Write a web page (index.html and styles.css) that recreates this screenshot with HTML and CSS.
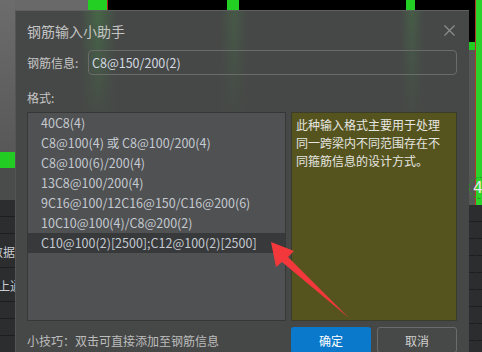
FILE: index.html
```html
<!DOCTYPE html>
<html lang="zh-CN">
<head>
    <meta charset="UTF-8">
    <title>钢筋输入小助手</title>
    <link rel="stylesheet" href="styles.css">
</head>
<body>

<div class="desk">
    <div class="edge-left">
        <div class="el-grey"></div>
        <div class="el-green"></div>
        <div class="el-mid"></div>
        <div class="el-rows">
            <span class="el-text t1">数据</span>
            <span class="el-text t2">上通</span>
        </div>
    </div>

    <div class="center">
        <div class="strip">
            <span class="seg seg-grey"></span>
            <span class="seg seg-green g1"></span>
            <span class="seg seg-black b1"></span>
            <span class="seg seg-green g2"></span>
            <span class="seg seg-black b2"></span>
            <span class="seg seg-green g3"></span>
            <span class="seg seg-black b3"></span>
        </div>
    </div>

    <div class="edge-right">
        <div class="er-a">
            <div class="er-black"></div>
            <div class="er-green-bit"></div>
            <div class="er-grey"></div>
            <div class="er-rows"></div>
        </div>
        <div class="er-line"></div>
        <div class="er-b">
            <div class="er-green"></div>
            <div class="er-rows"></div>
        </div>
        <span class="badge">4</span>
    </div>

    <!-- dialog window -->
    <div class="dialog">
        <div class="dlg-title">
            <span>钢筋输入小助手</span>
            <svg class="close" width="11" height="11" viewBox="0 0 11 11">
                <path d="M0.5 0.5 L10.5 10.5 M10.5 0.5 L0.5 10.5" stroke="#8c8d8c" stroke-width="1.2" fill="none"/>
            </svg>
        </div>
        <div class="field-row">
            <label class="field-label">钢筋信息:</label>
            <div class="input">C8@150/200(2)</div>
        </div>
        <div class="section-label">格式:</div>
        <div class="panes">
            <ul class="fmt-list">
                <li>40C8(4)</li>
                <li>C8@100(4) 或 C8@100/200(4)</li>
                <li>C8@100(6)/200(4)</li>
                <li>13C8@100/200(4)</li>
                <li>9C16@100/12C16@150/C16@200(6)</li>
                <li>10C10@100(4)/C8@200(2)</li>
                <li class="sel">C10@100(2)[2500];C12@100(2)[2500]</li>
            </ul>
            <div class="fmt-desc">此种输入格式主要用于处理同一跨梁内不同范围存在不同箍筋信息的设计方式。</div>
        </div>
        <div class="dlg-foot">
            <span class="tip">小技巧：双击可直接添加至钢筋信息</span>
            <div class="btns">
                <button class="btn btn-ok">确定</button>
                <button class="btn btn-cancel">取消</button>
            </div>
        </div>
    </div>

    <!-- red annotation arrow -->
    <svg class="arrow" width="482" height="352" viewBox="0 0 482 352">
        <polygon points="271,242 294,251 288,257 349,318 282,262 276,267" fill="#f2383a"/>
    </svg>
</div>

</body>
</html>
```

FILE: styles.css
```css
body {
    margin: 0;
    padding: 0;
    background: #2b2c2e;
    font-family: "Noto Sans CJK SC", "Noto Sans", sans-serif;
}
.desk {
    position: relative;
    display: flex;
    width: 482px;
    height: 352px;
    overflow: hidden;
}

/* background app, left side */
.edge-left {
    width: 15px;
    display: flex;
    flex-direction: column;
}
.el-grey {
    height: 152px;
    background: linear-gradient(#6c6c6c, #585858);
}
.el-green {
    height: 16px;
    background: #23cc23;
}
.el-mid {
    height: 32px;
    background: #4a4b4b;
}
.el-rows {
    flex: 1;
    position: relative;
    background: repeating-linear-gradient(#2c2d2f 0, #2c2d2f 16px, #1d1e1f 16px, #1d1e1f 17px);
    overflow: hidden;
}
.el-text {
    position: absolute;
    left: -9px;
    font-size: 12px;
    color: #c8ccd2;
    white-space: nowrap;
}
.t1 { top: 43px; }
.t2 { top: 77px; left: -2px; }

/* background app, top strip */
.center {
    width: 454px;
}
.strip {
    display: flex;
    height: 50px;
}
.seg { display: block; height: 100%; }
.seg-grey { width: 73px; background: #696969; }
.seg-green { background: #22cf22; }
.seg-black { background: #000; }
.g1 { width: 19px; border-right: 1px solid #b02020; }
.b1 { width: 119px; }
.g2 { width: 12px; }
.b2 { width: 167px; }
.g3 { width: 9px; }
.b3 { flex: 1; }

/* background app, right side */
.edge-right {
    position: relative;
    width: 13px;
    display: flex;
}
.er-a, .er-b {
    display: flex;
    flex-direction: column;
}
.er-a { width: 6px; }
.er-b { width: 6px; }
.er-black { height: 42px; background: #000; }
.er-green-bit { height: 8px; background: #22cc22; }
.er-grey { height: 155px; background: #555656; }
.er-line { width: 1px; height: 205px; background: #b8352a; }
.er-green { height: 205px; background: #2ad42a; }
.er-rows {
    flex: 1;
    background: repeating-linear-gradient(#2c2d2f 0, #2c2d2f 16px, #1d1e1f 16px, #1d1e1f 17px);
}
.badge {
    position: absolute;
    left: 0;
    top: 177px;
    width: 22px;
    height: 22px;
    border: 1px dashed #1f9a1f;
    border-radius: 50%;
    box-sizing: border-box;
    font-family: "DejaVu Sans", sans-serif;
    font-size: 16px;
    line-height: 20px;
    color: #e8e8e8;
    padding-left: 3px;
}

/* dialog */
.dialog {
    position: absolute;
    left: 15px;
    top: 10px;
    width: 454px;
    height: 360px;
    box-sizing: border-box;
    padding: 0 12px 0 11px;
    border-top: 1px solid #5f605f;
    border-left: 1px solid #545554;
    background:
        linear-gradient(rgba(70, 72, 71, 0), #464847 115px),
        linear-gradient(90deg, transparent 64px, rgba(70, 140, 70, 0.45) 82px, transparent 100px,
            transparent 204px, rgba(70, 140, 70, 0.25) 218px, transparent 232px,
            transparent 384px, rgba(70, 140, 70, 0.3) 396px, transparent 408px),
        #464847;
}
.dlg-title {
    height: 39px;
    display: flex;
    align-items: center;
    justify-content: space-between;
    font-size: 14px;
    color: #c4c4c4;
}
.close {
    margin-right: 2px;
}
.field-row {
    display: flex;
    align-items: center;
    height: 25px;
}
.field-label {
    width: 61px;
    font-size: 12px;
    color: #c6c6c6;
}
.input {
    flex: 1;
    height: 25px;
    box-sizing: border-box;
    border: 1px solid #6a6b6a;
    border-radius: 4px;
    padding-left: 3px;
    font-size: 12.5px;
    line-height: 23px;
    color: #d4dae0;
}
.section-label {
    padding-top: 14px;
    line-height: 17px;
    margin-bottom: 6px;
    font-size: 12px;
    color: #c6c6c6;
}
.panes {
    display: flex;
    gap: 5px;
    height: 209px;
}
.fmt-list {
    width: 259px;
    margin: 0;
    padding: 0;
    list-style: none;
    box-sizing: border-box;
    border: 1px solid #363737;
    background: #505153;
}
.fmt-list li {
    height: 20px;
    line-height: 20px;
    padding-left: 13px;
    font-size: 12.5px;
    color: #c4cad0;
    white-space: nowrap;
}
.fmt-list li.sel {
    background: #38393b;
}
.fmt-desc {
    flex: 1;
    box-sizing: border-box;
    border: 1px solid #3c3c2a;
    background: #55541f;
    padding: 3px 8px 0 4px;
    font-size: 12px;
    line-height: 18px;
    color: #e6e6e0;
}
.dlg-foot {
    display: flex;
    align-items: center;
    justify-content: space-between;
    margin-top: 6px;
}
.tip {
    font-size: 12px;
    color: #bdbdbd;
}
.btns {
    display: flex;
    gap: 6px;
}
.btn {
    width: 80px;
    height: 26px;
    border-radius: 3px;
    font-family: inherit;
    font-size: 12px;
    cursor: pointer;
}
.btn-ok {
    background: #0a79cb;
    border: none;
    color: #fff;
}
.btn-cancel {
    background: #474948;
    border: 1px solid #6a6b6a;
    color: #d0d0d0;
}

.arrow {
    position: absolute;
    left: 0;
    top: 0;
    pointer-events: none;
}
```
